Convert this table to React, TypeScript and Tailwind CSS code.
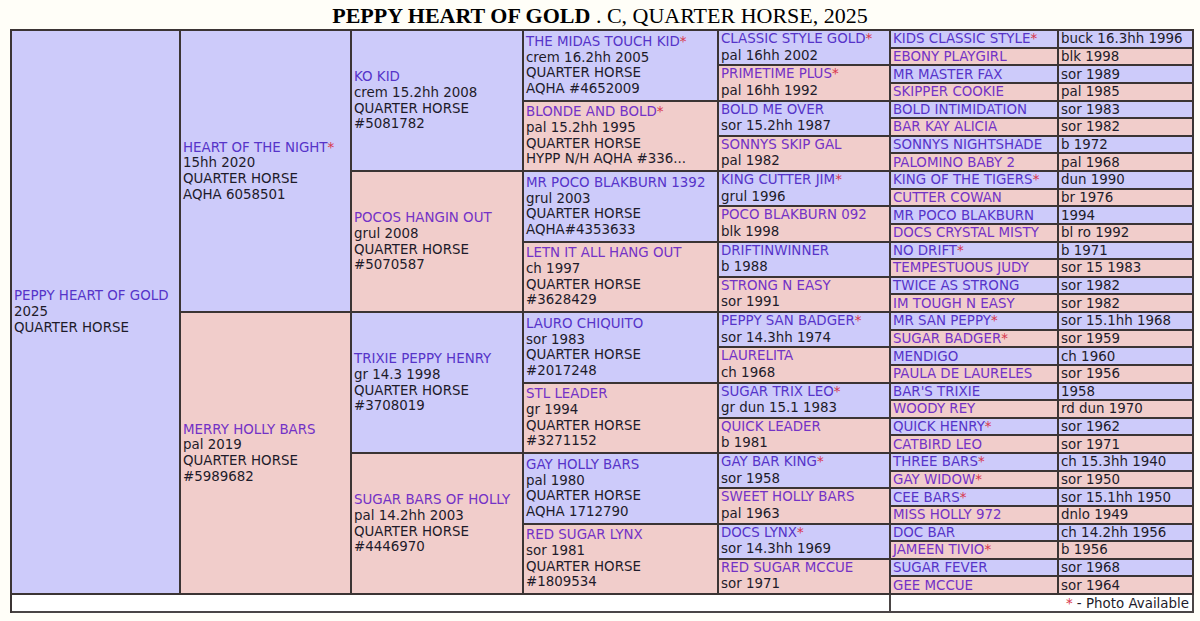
import React from 'react';

type Horse = { name: string; star?: boolean; lines: string[] };

const gen0: Horse = { name: 'PEPPY HEART OF GOLD', lines: ['2025', 'QUARTER HORSE'] };

const gen1: Horse[] = [
  { name: 'HEART OF THE NIGHT', star: true, lines: ['15hh 2020', 'QUARTER HORSE', 'AQHA 6058501'] },
  { name: 'MERRY HOLLY BARS', lines: ['pal 2019', 'QUARTER HORSE', '#5989682'] },
];

const gen2: Horse[] = [
  { name: 'KO KID', lines: ['crem 15.2hh 2008', 'QUARTER HORSE', '#5081782'] },
  { name: 'POCOS HANGIN OUT', lines: ['grul 2008', 'QUARTER HORSE', '#5070587'] },
  { name: 'TRIXIE PEPPY HENRY', lines: ['gr 14.3 1998', 'QUARTER HORSE', '#3708019'] },
  { name: 'SUGAR BARS OF HOLLY', lines: ['pal 14.2hh 2003', 'QUARTER HORSE', '#4446970'] },
];

const gen3: Horse[] = [
  { name: 'THE MIDAS TOUCH KID', star: true, lines: ['crem 16.2hh 2005', 'QUARTER HORSE', 'AQHA #4652009'] },
  { name: 'BLONDE AND BOLD', star: true, lines: ['pal 15.2hh 1995', 'QUARTER HORSE', 'HYPP N/H AQHA #336...'] },
  { name: 'MR POCO BLAKBURN 1392', lines: ['grul 2003', 'QUARTER HORSE', 'AQHA#4353633'] },
  { name: 'LETN IT ALL HANG OUT', lines: ['ch 1997', 'QUARTER HORSE', '#3628429'] },
  { name: 'LAURO CHIQUITO', lines: ['sor 1983', 'QUARTER HORSE', '#2017248'] },
  { name: 'STL LEADER', lines: ['gr 1994', 'QUARTER HORSE', '#3271152'] },
  { name: 'GAY HOLLY BARS', lines: ['pal 1980', 'QUARTER HORSE', 'AQHA 1712790'] },
  { name: 'RED SUGAR LYNX', lines: ['sor 1981', 'QUARTER HORSE', '#1809534'] },
];

const gen4: Horse[] = [
  { name: 'CLASSIC STYLE GOLD', star: true, lines: ['pal 16hh 2002'] },
  { name: 'PRIMETIME PLUS', star: true, lines: ['pal 16hh 1992'] },
  { name: 'BOLD ME OVER', lines: ['sor 15.2hh 1987'] },
  { name: 'SONNYS SKIP GAL', lines: ['pal 1982'] },
  { name: 'KING CUTTER JIM', star: true, lines: ['grul 1996'] },
  { name: 'POCO BLAKBURN 092', lines: ['blk 1998'] },
  { name: 'DRIFTINWINNER', lines: ['b 1988'] },
  { name: 'STRONG N EASY', lines: ['sor 1991'] },
  { name: 'PEPPY SAN BADGER', star: true, lines: ['sor 14.3hh 1974'] },
  { name: 'LAURELITA', lines: ['ch 1968'] },
  { name: 'SUGAR TRIX LEO', star: true, lines: ['gr dun 15.1 1983'] },
  { name: 'QUICK LEADER', lines: ['b 1981'] },
  { name: 'GAY BAR KING', star: true, lines: ['sor 1958'] },
  { name: 'SWEET HOLLY BARS', lines: ['pal 1963'] },
  { name: 'DOCS LYNX', star: true, lines: ['sor 14.3hh 1969'] },
  { name: 'RED SUGAR MCCUE', lines: ['sor 1971'] },
];

const gen5: [string, boolean, string][] = [
  ['KIDS CLASSIC STYLE', true, 'buck 16.3hh 1996'],
  ['EBONY PLAYGIRL', false, 'blk 1998'],
  ['MR MASTER FAX', false, 'sor 1989'],
  ['SKIPPER COOKIE', false, 'pal 1985'],
  ['BOLD INTIMIDATION', false, 'sor 1983'],
  ['BAR KAY ALICIA', false, 'sor 1982'],
  ['SONNYS NIGHTSHADE', false, 'b 1972'],
  ['PALOMINO BABY 2', false, 'pal 1968'],
  ['KING OF THE TIGERS', true, 'dun 1990'],
  ['CUTTER COWAN', false, 'br 1976'],
  ['MR POCO BLAKBURN', false, '1994'],
  ['DOCS CRYSTAL MISTY', false, 'bl ro 1992'],
  ['NO DRIFT', true, 'b 1971'],
  ['TEMPESTUOUS JUDY', false, 'sor 15 1983'],
  ['TWICE AS STRONG', false, 'sor 1982'],
  ['IM TOUGH N EASY', false, 'sor 1982'],
  ['MR SAN PEPPY', true, 'sor 15.1hh 1968'],
  ['SUGAR BADGER', true, 'sor 1959'],
  ['MENDIGO', false, 'ch 1960'],
  ['PAULA DE LAURELES', false, 'sor 1956'],
  ["BAR'S TRIXIE", false, '1958'],
  ['WOODY REY', false, 'rd dun 1970'],
  ['QUICK HENRY', true, 'sor 1962'],
  ['CATBIRD LEO', false, 'sor 1971'],
  ['THREE BARS', true, 'ch 15.3hh 1940'],
  ['GAY WIDOW', true, 'sor 1950'],
  ['CEE BARS', true, 'sor 15.1hh 1950'],
  ['MISS HOLLY 972', false, 'dnlo 1949'],
  ['DOC BAR', false, 'ch 14.2hh 1956'],
  ['JAMEEN TIVIO', true, 'b 1956'],
  ['SUGAR FEVER', false, 'sor 1968'],
  ['GEE MCCUE', false, 'sor 1964'],
];

function Star() {
  return <span className="text-[#d8384e]">*</span>;
}

function Name({ horse, dam }: { horse: { name: string; star?: boolean }; dam: boolean }) {
  return (
    <span className={dam ? 'text-[#7432c6]' : 'text-[#5634c9]'}>
      {horse.name}
      {horse.star && <Star />}
    </span>
  );
}

function Cell({
  horse,
  dam,
  rowSpan,
  width,
  tight,
}: {
  horse: Horse;
  dam: boolean;
  rowSpan: number;
  width: string;
  tight?: boolean;
}) {
  return (
    <td
      rowSpan={rowSpan}
      className={`${width} ${dam ? 'bg-[#f1cdcb]' : 'bg-[#cdcbfa]'} ${
        tight ? 'leading-[16.5px]' : 'leading-[15.7px]'
      } border-r-2 border-b-2 border-[#3b3434] px-[2px] align-middle whitespace-nowrap overflow-hidden`}
    >
      <div>
        <Name horse={horse} dam={dam} />
      </div>
      {horse.lines.map((l) => (
        <div key={l}>{l}</div>
      ))}
    </td>
  );
}

export default function App() {
  const rows = [];
  for (let r = 0; r < 32; r++) {
    const first = r === 0;
    const [n5, s5, info5] = gen5[r];
    const dam5 = r % 2 === 1;
    rows.push(
      <tr key={r} className="h-[17.63px]">
        {first && <Cell horse={gen0} dam={false} rowSpan={32} width="w-[169px]" />}
        {r % 16 === 0 && (
          <Cell horse={gen1[r / 16]} dam={(r / 16) % 2 === 1} rowSpan={16} width={first ? 'w-[171px]' : ''} />
        )}
        {r % 8 === 0 && (
          <Cell horse={gen2[r / 8]} dam={(r / 8) % 2 === 1} rowSpan={8} width={first ? 'w-[172px]' : ''} />
        )}
        {r % 4 === 0 && (
          <Cell horse={gen3[r / 4]} dam={(r / 4) % 2 === 1} rowSpan={4} width={first ? 'w-[195px]' : ''} />
        )}
        {r % 2 === 0 && (
          <Cell horse={gen4[r / 2]} dam={(r / 2) % 2 === 1} rowSpan={2} width={first ? 'w-[172px]' : ''} tight />
        )}
        <td
          className={`${first ? 'w-[168px]' : ''} ${
            dam5 ? 'bg-[#f1cdcb]' : 'bg-[#cdcbfa]'
          } border-r-2 border-b-2 border-[#3b3434] px-[2px] leading-[15px] align-middle whitespace-nowrap overflow-hidden`}
        >
          <Name horse={{ name: n5, star: s5 }} dam={dam5} />
        </td>
        <td
          className={`${first ? 'w-[135px]' : ''} ${
            dam5 ? 'bg-[#f1cdcb]' : 'bg-[#cdcbfa]'
          } border-r-2 border-b-2 border-[#3b3434] px-[2px] leading-[15px] align-middle whitespace-nowrap overflow-hidden`}
        >
          {info5}
        </td>
      </tr>
    );
  }

  return (
    <div className="min-h-screen bg-[#fffef8]">
      <div className="h-[29px] pt-[2px] text-center font-['Liberation_Serif',serif] text-[22px] leading-[27px] text-black">
        <span className="font-bold">PEPPY HEART OF GOLD</span> . C, QUARTER HORSE, 2025
      </div>
      <table className="ml-[10px] w-[1184px] table-fixed border-separate border-spacing-0 border-l-2 border-t-2 border-[#3b3434] font-['DejaVu_Sans',Verdana,sans-serif] text-[13.4px] text-[#1e1b2a]">
        <tbody>
          {rows}
          <tr className="h-[18.4px]">
            <td colSpan={5} className="bg-white border-r-2 border-b-2 border-[#4a4545]"></td>
            <td
              colSpan={2}
              className="bg-white border-r-2 border-b-2 border-[#4a4545] px-[3px] text-right leading-[15px] whitespace-nowrap"
            >
              <Star /> - Photo Available
            </td>
          </tr>
        </tbody>
      </table>
    </div>
  );
}
